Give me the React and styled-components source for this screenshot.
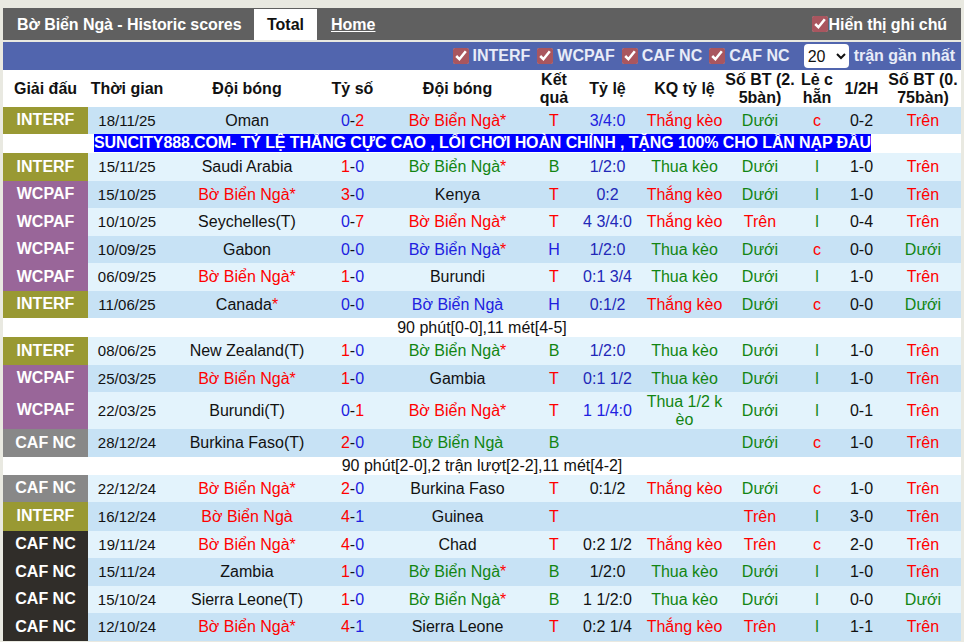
import React from 'react';
import styled, { createGlobalStyle } from 'styled-components';

const RED = '#ff0000';
const GREEN = '#128512';
const BLUE = '#2020e0';
const NAVY = '#2228b8';
const INK = '#111111';

const GlobalStyle = createGlobalStyle`
  html, body {
    margin: 0;
    padding: 0;
    background: #e9e9e1;
  }
  body {
    font-family: "Liberation Sans", Arial, sans-serif;
    font-size: 16px;
    color: ${INK};
  }
`;

const Page = styled.div`
  width: 958px;
  height: 642px;
  padding: 8px 3px 0;
  overflow: hidden;
`;

const TitleBar = styled.div`
  display: flex;
  align-items: stretch;
  height: 32px;
  background: #606060;
  color: #fff;
  font-weight: bold;
  line-height: 33px;
`;

const Title = styled.div`
  width: 251px;
  padding-left: 14px;
  box-sizing: border-box;
  letter-spacing: -0.07px;
  white-space: nowrap;
`;

const ActiveTab = styled.div`
  width: 63px;
  margin-top: 1px;
  background: #fff;
  color: #111;
  text-align: center;
  line-height: 31px;
`;

const TabLink = styled.a`
  margin-left: 14px;
  color: #fff;
  text-decoration: underline;
`;

const NoteToggle = styled.label`
  display: flex;
  align-items: center;
  margin-left: auto;
  padding-right: 14px;
  letter-spacing: -0.1px;
`;

const Check = styled.input.attrs({ type: 'checkbox', defaultChecked: true })`
  width: 16px;
  height: 16px;
  margin: 0 1px 0 0;
  accent-color: #a9565f;
`;

const FilterBar = styled.div`
  display: flex;
  align-items: center;
  justify-content: flex-end;
  height: 28px;
  margin-top: 2px;
  padding-right: 6px;
  background: #5165ae;
  color: #e8ecf8;
  font-weight: bold;
`;

const Filter = styled.label`
  display: flex;
  align-items: center;
  gap: 3px;
  margin-right: 7px;
  white-space: nowrap;
`;

const CountSelect = styled.select`
  width: 45px;
  height: 24px;
  margin: 0 5px 0 7px;
  border: none;
  border-radius: 4px;
  background: #fff;
  color: #111;
  font-family: inherit;
  font-size: 16px;
`;

const Table = styled.table`
  width: 958px;
  table-layout: fixed;
  border-collapse: collapse;
  background: #fff;
`;

const HeadCell = styled.th`
  height: 37px;
  padding: 0;
  font-size: 16px;
  font-weight: bold;
  line-height: 18px;
  text-align: center;
  color: #111;
  word-break: break-all;
`;

const HeadWord = styled.span`
  word-break: normal;
`;

const Row = styled.tr`
  background: ${(p) => (p.$odd ? '#c7e2f5' : '#e3f3fc')};
`;

const Cell = styled.td`
  height: ${(p) => p.$h || 27}px;
  padding: 0;
  line-height: 18px;
  text-align: center;
  color: ${(p) => p.$color || INK};
  word-break: break-all;
`;

const TeamCell = styled(Cell)`
  word-break: normal;
`;

const DateCell = styled(Cell)`
  font-size: 15px;
`;

const LeagueCell = styled.td`
  padding: 0 0 1px;
  box-sizing: border-box;
  background: ${(p) => p.$bg};
  color: #fff;
  font-weight: bold;
  text-align: center;
`;

const NoteCell = styled.td`
  height: ${(p) => p.$h || 19}px;
  padding: 0;
  line-height: 18px;
  text-align: center;
  background: #fff;
`;

const PromoCell = styled.td`
  height: 19px;
  padding: 0 0 0 91px;
  background: #fff;
  line-height: 18px;
  vertical-align: top;
  white-space: nowrap;
`;

const Promo = styled.span`
  display: block;
  width: fit-content;
  background: #0000ff;
  color: #fff;
  font-weight: bold;
  letter-spacing: -0.115px;
`;

const Star = styled.span`
  color: ${RED};
`;

const ScorePart = styled.span`
  color: ${(p) => p.$color};
`;

const leagueColors = {
  INTERF: '#999933',
  WCPAF: '#996699',
  CAF: '#888888',
  DARK: '#302d29',
};

const columns = [85, 78, 162, 49, 161, 32, 75, 79, 72, 42, 47, 76];

const headers = [
  'Giải đấu',
  'Thời gian',
  'Đội bóng',
  'Tỷ số',
  'Đội bóng',
  'Kết quả',
  'Tỷ lệ',
  'KQ tỷ lệ',
  'Số BT (2.5bàn)',
  'Lẻ c hẵn',
  '1/2H',
  'Số BT (0.75bàn)',
];

const HOME = 'Bờ Biển Ngà';

// league label, colour key, date, team1, team1 colour, score, team2, team2 colour,
// result, odds, odds colour, odds result, 2.5 goals, odd/even, half, 0.75 goals, row height
const m = (league, tone, date, t1, c1, score, t2, c2, res, odds, oddsColor, kq, bt, le, half, bt2, h) => ({
  league, tone, date, t1, c1, score, t2, c2, res, odds, oddsColor, kq, bt, le, half, bt2, h,
});

const rows = [
  m('INTERF', 'INTERF', '18/11/25', 'Oman', INK, '0-2', `${HOME}*`, RED, 'T', '3/4:0', BLUE, 'Thắng kèo', 'Dưới', 'c', '0-2', 'Trên'),
  { promo: 'SUNCITY888.COM- TỶ LỆ THẮNG CỰC CAO , LỐI CHƠI HOÀN CHỈNH , TẶNG 100% CHO LẦN NẠP ĐẦU' },
  m('INTERF', 'INTERF', '15/11/25', 'Saudi Arabia', INK, '1-0', `${HOME}*`, GREEN, 'B', '1/2:0', NAVY, 'Thua kèo', 'Dưới', 'l', '1-0', 'Trên', 28),
  m('WCPAF', 'WCPAF', '15/10/25', `${HOME}*`, RED, '3-0', 'Kenya', INK, 'T', '0:2', NAVY, 'Thắng kèo', 'Dưới', 'l', '1-0', 'Trên'),
  m('WCPAF', 'WCPAF', '10/10/25', 'Seychelles(T)', INK, '0-7', `${HOME}*`, RED, 'T', '4 3/4:0', NAVY, 'Thắng kèo', 'Trên', 'l', '0-4', 'Trên', 28),
  m('WCPAF', 'WCPAF', '10/09/25', 'Gabon', INK, '0-0', `${HOME}*`, BLUE, 'H', '1/2:0', NAVY, 'Thua kèo', 'Dưới', 'c', '0-0', 'Dưới'),
  m('WCPAF', 'WCPAF', '06/09/25', `${HOME}*`, RED, '1-0', 'Burundi', INK, 'T', '0:1 3/4', NAVY, 'Thua kèo', 'Dưới', 'l', '1-0', 'Trên', 28),
  m('INTERF', 'INTERF', '11/06/25', 'Canada*', INK, '0-0', HOME, BLUE, 'H', '0:1/2', NAVY, 'Thắng kèo', 'Dưới', 'c', '0-0', 'Dưới'),
  { note: '90 phút[0-0],11 mét[4-5]' },
  m('INTERF', 'INTERF', '08/06/25', 'New Zealand(T)', INK, '1-0', `${HOME}*`, GREEN, 'B', '1/2:0', NAVY, 'Thua kèo', 'Dưới', 'l', '1-0', 'Trên', 28),
  m('WCPAF', 'WCPAF', '25/03/25', `${HOME}*`, RED, '1-0', 'Gambia', INK, 'T', '0:1 1/2', NAVY, 'Thua kèo', 'Dưới', 'l', '1-0', 'Trên'),
  m('WCPAF', 'WCPAF', '22/03/25', 'Burundi(T)', INK, '0-1', `${HOME}*`, RED, 'T', '1 1/4:0', BLUE, 'Thua 1/2 kèo', 'Dưới', 'l', '0-1', 'Trên', 37),
  m('CAF NC', 'CAF', '28/12/24', 'Burkina Faso(T)', INK, '2-0', HOME, GREEN, 'B', '', INK, '', 'Dưới', 'c', '1-0', 'Trên', 28),
  { note: '90 phút[2-0],2 trận lượt[2-2],11 mét[4-2]', h: 18 },
  m('CAF NC', 'CAF', '22/12/24', `${HOME}*`, RED, '2-0', 'Burkina Faso', INK, 'T', '0:1/2', INK, 'Thắng kèo', 'Dưới', 'c', '1-0', 'Trên'),
  m('INTERF', 'INTERF', '16/12/24', HOME, RED, '4-1', 'Guinea', INK, 'T', '', INK, '', 'Trên', 'l', '3-0', 'Trên', 29),
  m('CAF NC', 'DARK', '19/11/24', `${HOME}*`, RED, '4-0', 'Chad', INK, 'T', '0:2 1/2', INK, 'Thắng kèo', 'Trên', 'c', '2-0', 'Trên'),
  m('CAF NC', 'DARK', '15/11/24', 'Zambia', INK, '1-0', `${HOME}*`, GREEN, 'B', '1/2:0', INK, 'Thua kèo', 'Dưới', 'l', '1-0', 'Trên', 28),
  m('CAF NC', 'DARK', '15/10/24', 'Sierra Leone(T)', INK, '1-0', `${HOME}*`, GREEN, 'B', '1 1/2:0', INK, 'Thua kèo', 'Dưới', 'l', '0-0', 'Dưới'),
  m('CAF NC', 'DARK', '12/10/24', `${HOME}*`, RED, '4-1', 'Sierra Leone', INK, 'T', '0:2 1/4', INK, 'Thắng kèo', 'Trên', 'l', '1-1', 'Trên', 28),
];

const resultColor = { T: RED, B: GREEN, H: BLUE };
const kqColor = (kq) => (kq.startsWith('Thắng') ? RED : GREEN);
const overColor = (v) => (v === 'Trên' ? RED : GREEN);

const Team = ({ name }) =>
  name.endsWith('*') ? (
    <>
      {name.slice(0, -1)}
      <Star>*</Star>
    </>
  ) : (
    name
  );

const Score = ({ value }) => {
  const [a, b] = value.split('-');
  return (
    <>
      <ScorePart $color={+a > +b ? RED : BLUE}>{a}</ScorePart>-
      <ScorePart $color={+b > +a ? RED : BLUE}>{b}</ScorePart>
    </>
  );
};

const MatchRow = ({ row, odd }) => {
  const h = row.h || 27;
  return (
    <Row $odd={odd}>
      <LeagueCell $bg={leagueColors[row.tone]}>{row.league}</LeagueCell>
      <DateCell $h={h}>{row.date}</DateCell>
      <TeamCell $h={h} $color={row.c1}><Team name={row.t1} /></TeamCell>
      <Cell $h={h}><Score value={row.score} /></Cell>
      <TeamCell $h={h} $color={row.c2}><Team name={row.t2} /></TeamCell>
      <Cell $h={h} $color={resultColor[row.res]}>{row.res}</Cell>
      <Cell $h={h} $color={row.oddsColor}>{row.odds}</Cell>
      <Cell $h={h} $color={kqColor(row.kq)}>{row.kq}</Cell>
      <Cell $h={h} $color={overColor(row.bt)}>{row.bt}</Cell>
      <Cell $h={h} $color={row.le === 'c' ? RED : GREEN}>{row.le}</Cell>
      <Cell $h={h}>{row.half}</Cell>
      <Cell $h={h} $color={overColor(row.bt2)}>{row.bt2}</Cell>
    </Row>
  );
};

export default function App() {
  let count = 0;
  return (
    <Page>
      <GlobalStyle />
      <TitleBar>
        <Title>Bờ Biển Ngà - Historic scores</Title>
        <ActiveTab>Total</ActiveTab>
        <TabLink href="#">Home</TabLink>
        <NoteToggle>
          <Check />
          Hiển thị ghi chú
        </NoteToggle>
      </TitleBar>
      <FilterBar>
        <Filter><Check />INTERF</Filter>
        <Filter><Check />WCPAF</Filter>
        <Filter><Check />CAF NC</Filter>
        <Filter><Check />CAF NC</Filter>
        <CountSelect defaultValue="20">
          <option value="10">10</option>
          <option value="20">20</option>
          <option value="30">30</option>
        </CountSelect>
        trận gần nhất
      </FilterBar>
      <Table>
        <colgroup>
          {columns.map((w, i) => (
            <col key={i} width={w} />
          ))}
        </colgroup>
        <thead>
          <tr>
            {headers.map((h, i) => (
              <HeadCell key={i}>
                {h.includes('.') ? h : <HeadWord>{h}</HeadWord>}
              </HeadCell>
            ))}
          </tr>
        </thead>
        <tbody>
          {rows.map((row, i) => {
            if (row.promo) {
              return (
                <tr key={i}>
                  <PromoCell colSpan={12}><Promo>{row.promo}</Promo></PromoCell>
                </tr>
              );
            }
            if (row.note) {
              return (
                <tr key={i}>
                  <NoteCell colSpan={12} $h={row.h}>{row.note}</NoteCell>
                </tr>
              );
            }
            count += 1;
            return <MatchRow key={i} row={row} odd={count % 2 === 1} />;
          })}
        </tbody>
      </Table>
    </Page>
  );
}
